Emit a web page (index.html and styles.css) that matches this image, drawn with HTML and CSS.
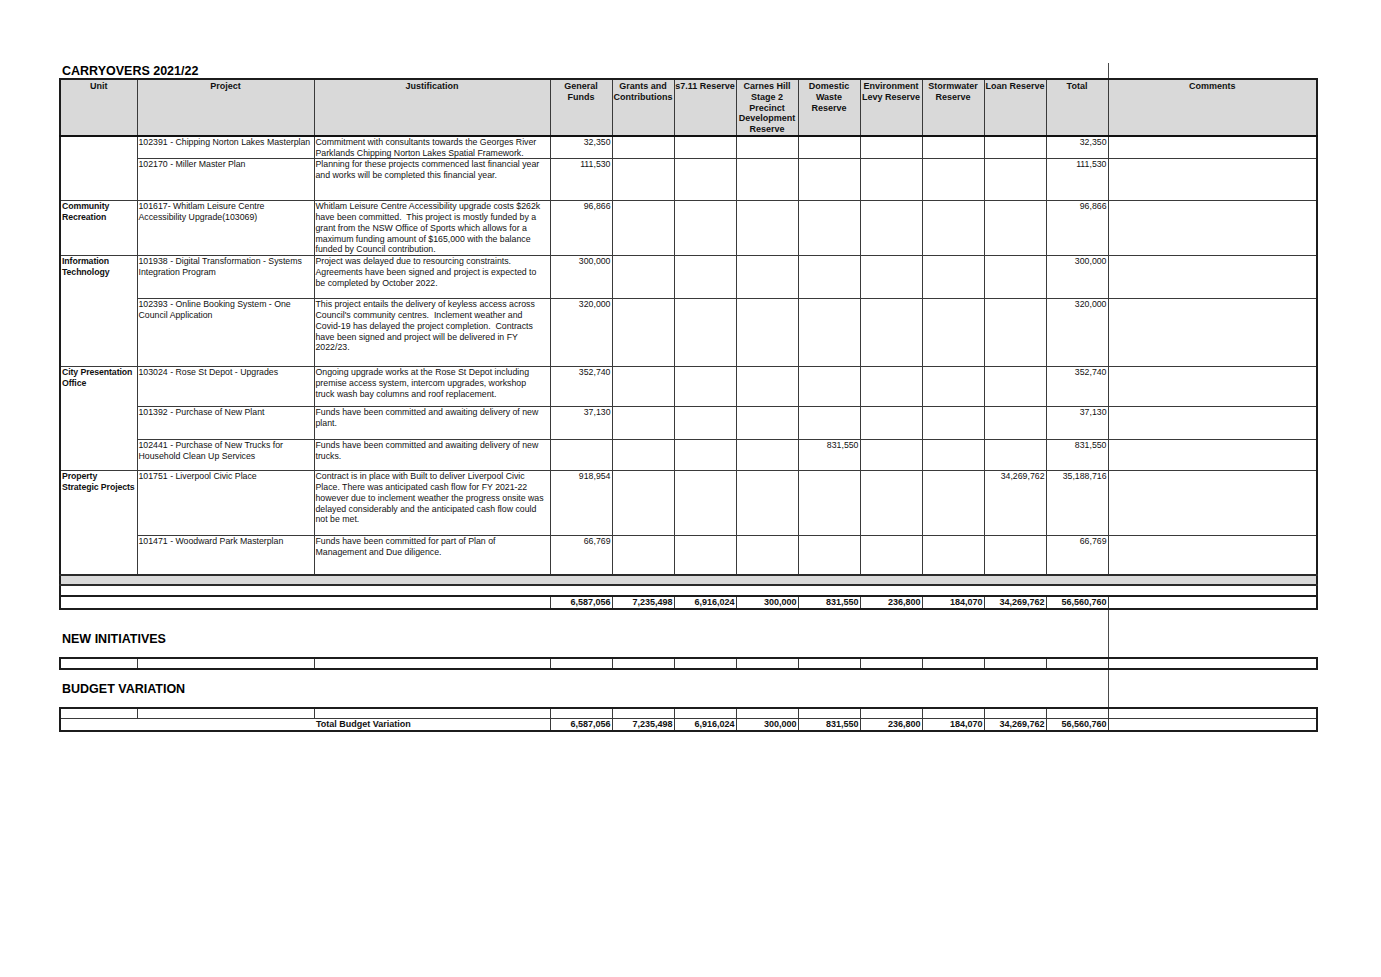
FILE: index.html
```
<!DOCTYPE html>
<html lang="en">
<head>
<meta charset="utf-8">
<title>Carryovers 2021/22</title>
<link rel="stylesheet" href="styles.css">
</head>
<body>
<div class="page">
  <div class="section-head head-first"><h2 class="title">CARRYOVERS 2021/22</h2></div>
  <table class="grid">
    <colgroup>
      <col class="c-unit"><col class="c-proj"><col class="c-just">
      <col class="c-num"><col class="c-num"><col class="c-num"><col class="c-num"><col class="c-num">
      <col class="c-num"><col class="c-num"><col class="c-num"><col class="c-num">
      <col class="c-com">
    </colgroup>
    <thead>
      <tr class="h-head">
        <th>Unit</th>
        <th>Project</th>
        <th>Justification</th>
        <th>General<br>Funds</th>
        <th>Grants and<br>Contributions</th>
        <th>s7.11 Reserve</th>
        <th>Carnes Hill<br>Stage 2<br>Precinct<br>Development<br>Reserve</th>
        <th>Domestic<br>Waste<br>Reserve</th>
        <th>Environment<br>Levy Reserve</th>
        <th>Stormwater<br>Reserve</th>
        <th>Loan Reserve</th>
        <th>Total</th>
        <th>Comments</th>
      </tr>
    </thead>
    <tbody>
      <tr class="h22">
        <td class="unit" rowspan="2"></td>
        <td>102391 - Chipping Norton Lakes Masterplan</td>
        <td>Commitment with consultants towards the Georges River<br>Parklands Chipping Norton Lakes Spatial Framework.</td>
        <td class="num">32,350</td><td></td><td></td><td></td><td></td><td></td><td></td><td></td>
        <td class="num">32,350</td><td></td>
      </tr>
      <tr class="h42">
        <td>102170 - Miller Master Plan</td>
        <td>Planning for these projects commenced last financial year<br>and works will be completed this financial year.</td>
        <td class="num">111,530</td><td></td><td></td><td></td><td></td><td></td><td></td><td></td>
        <td class="num">111,530</td><td></td>
      </tr>
      <tr class="h55">
        <td class="unit">Community<br>Recreation</td>
        <td>101617- Whitlam Leisure Centre<br>Accessibility Upgrade(103069)</td>
        <td>Whitlam Leisure Centre Accessibility upgrade costs $262k<br>have been committed.&nbsp; This project is mostly funded by a<br>grant from the NSW Office of Sports which allows for a<br>maximum funding amount of $165,000 with the balance<br>funded by Council contribution.</td>
        <td class="num">96,866</td><td></td><td></td><td></td><td></td><td></td><td></td><td></td>
        <td class="num">96,866</td><td></td>
      </tr>
      <tr class="h43">
        <td class="unit" rowspan="2">Information<br>Technology</td>
        <td>101938 - Digital Transformation - Systems<br>Integration Program</td>
        <td>Project was delayed due to resourcing constraints.<br>Agreements have been signed and project is expected to<br>be completed by October 2022.</td>
        <td class="num">300,000</td><td></td><td></td><td></td><td></td><td></td><td></td><td></td>
        <td class="num">300,000</td><td></td>
      </tr>
      <tr class="h68">
        <td>102393 - Online Booking System - One<br>Council Application</td>
        <td>This project entails the delivery of keyless access across<br>Council's community centres.&nbsp; Inclement weather and<br>Covid-19 has delayed the project completion.&nbsp; Contracts<br>have been signed and project will be delivered in FY<br>2022/23.</td>
        <td class="num">320,000</td><td></td><td></td><td></td><td></td><td></td><td></td><td></td>
        <td class="num">320,000</td><td></td>
      </tr>
      <tr class="h40">
        <td class="unit" rowspan="3">City Presentation<br>Office</td>
        <td>103024 - Rose St Depot - Upgrades</td>
        <td>Ongoing upgrade works at the Rose St Depot including<br>premise access system, intercom upgrades, workshop<br>truck wash bay columns and roof replacement.</td>
        <td class="num">352,740</td><td></td><td></td><td></td><td></td><td></td><td></td><td></td>
        <td class="num">352,740</td><td></td>
      </tr>
      <tr class="h33">
        <td>101392 - Purchase of New Plant</td>
        <td>Funds have been committed and awaiting delivery of new<br>plant.</td>
        <td class="num">37,130</td><td></td><td></td><td></td><td></td><td></td><td></td><td></td>
        <td class="num">37,130</td><td></td>
      </tr>
      <tr class="h31">
        <td>102441 - Purchase of New Trucks for<br>Household Clean Up Services</td>
        <td>Funds have been committed and awaiting delivery of new<br>trucks.</td>
        <td></td><td></td><td></td><td></td><td class="num">831,550</td><td></td><td></td><td></td>
        <td class="num">831,550</td><td></td>
      </tr>
      <tr class="h65">
        <td class="unit" rowspan="2">Property<br>Strategic Projects</td>
        <td>101751 - Liverpool Civic Place</td>
        <td>Contract is in place with Built to deliver Liverpool Civic<br>Place. There was anticipated cash flow for FY 2021-22<br>however due to inclement weather the progress onsite was<br>delayed considerably and the anticipated cash flow could<br>not be met.</td>
        <td class="num">918,954</td><td></td><td></td><td></td><td></td><td></td><td></td>
        <td class="num">34,269,762</td>
        <td class="num">35,188,716</td><td></td>
      </tr>
      <tr class="h39">
        <td>101471 - Woodward Park Masterplan</td>
        <td>Funds have been committed for part of Plan of<br>Management and Due diligence.</td>
        <td class="num">66,769</td><td></td><td></td><td></td><td></td><td></td><td></td><td></td>
        <td class="num">66,769</td><td></td>
      </tr>
      <tr class="h10 band">
        <td colspan="13"></td>
      </tr>
      <tr class="h11 blank">
        <td colspan="13"></td>
      </tr>
      <tr class="h11 tot">
        <td colspan="3"></td>
        <td class="num">6,587,056</td>
        <td class="num">7,235,498</td>
        <td class="num">6,916,024</td>
        <td class="num">300,000</td>
        <td class="num">831,550</td>
        <td class="num">236,800</td>
        <td class="num">184,070</td>
        <td class="num">34,269,762</td>
        <td class="num">56,560,760</td>
        <td></td>
      </tr>
    </tbody>
  </table>

  <div class="section-head head-new"><h2 class="title">NEW INITIATIVES</h2></div>
  <table class="grid">
    <colgroup>
      <col class="c-unit"><col class="c-proj"><col class="c-just">
      <col class="c-num"><col class="c-num"><col class="c-num"><col class="c-num"><col class="c-num">
      <col class="c-num"><col class="c-num"><col class="c-num"><col class="c-num">
      <col class="c-com">
    </colgroup>
    <tbody>
      <tr class="h11">
        <td></td><td></td><td></td><td></td><td></td><td></td><td></td><td></td><td></td><td></td><td></td><td></td><td></td>
      </tr>
    </tbody>
  </table>

  <div class="section-head head-budget"><h2 class="title">BUDGET VARIATION</h2></div>
  <table class="grid">
    <colgroup>
      <col class="c-unit"><col class="c-proj"><col class="c-just">
      <col class="c-num"><col class="c-num"><col class="c-num"><col class="c-num"><col class="c-num">
      <col class="c-num"><col class="c-num"><col class="c-num"><col class="c-num">
      <col class="c-com">
    </colgroup>
    <tbody>
      <tr class="h11">
        <td></td><td></td><td></td><td></td><td></td><td></td><td></td><td></td><td></td><td></td><td></td><td></td><td></td>
      </tr>
      <tr class="h11 tot-b">
        <td colspan="2" class="open-r"></td>
        <td class="open-l label">Total Budget Variation</td>
        <td class="num">6,587,056</td>
        <td class="num">7,235,498</td>
        <td class="num">6,916,024</td>
        <td class="num">300,000</td>
        <td class="num">831,550</td>
        <td class="num">236,800</td>
        <td class="num">184,070</td>
        <td class="num">34,269,762</td>
        <td class="num">56,560,760</td>
        <td></td>
      </tr>
    </tbody>
  </table>
</div>
</body>
</html>
```
FILE: styles.css
```
html, body {
  margin: 0;
  padding: 0;
  background: #ffffff;
}

body {
  font-family: "Liberation Sans", Arial, sans-serif;
  color: #111111;
}

.page {
  padding: 63px 0 0 59px;
}

.section-head {
  box-sizing: border-box;
  width: 1050px;
  border-right: 1px solid #4a4a4a;
  display: flex;
  align-items: flex-start;
}

.title {
  margin: 0;
  padding-left: 3px;
  font-size: 12.5px;
  line-height: 13px;
  font-weight: bold;
  color: #000000;
}

.head-first {
  height: 15px;
  align-items: flex-end;
}

.head-new {
  height: 47px;
  padding-top: 23px;
}

.head-budget {
  height: 37px;
  padding-top: 13px;
}

.grid {
  border-collapse: collapse;
  table-layout: fixed;
  width: 1257px;
  border: 2px solid #1c1c1c;
}

.c-unit { width: 77px; }
.c-proj { width: 177px; }
.c-just { width: 236px; }
.c-num { width: 62px; }
.c-com { width: 209px; }

.grid th,
.grid td {
  border: 1px solid #3a3a3a;
  padding: 0 1px;
  vertical-align: top;
  font-size: 8.75px;
  line-height: 10.75px;
  white-space: nowrap;
  overflow: hidden;
  text-align: left;
}

.grid th {
  background: #d9d9d9;
  font-weight: bold;
  text-align: center;
  padding: 1px 0 0;
  border-bottom: 2px solid #111111;
  font-size: 9px;
  line-height: 10.8px;
  overflow: visible;
}

.grid td.unit {
  font-weight: bold;
  padding-left: 1px;
  letter-spacing: -0.1px;
}

.grid td.num {
  text-align: right;
  padding: 0 1px 0 0;
}

.h-head { height: 56px; }
.h22 { height: 22px; }
.h42 { height: 42px; }
.h55 { height: 55px; }
.h43 { height: 43px; }
.h68 { height: 68px; }
.h40 { height: 40px; }
.h33 { height: 33px; }
.h31 { height: 31px; }
.h65 { height: 65px; }
.h39 { height: 39px; }
.h10 { height: 10px; }
.h11 { height: 11px; }
.h12 { height: 12px; }

.band td {
  background: #d9d9d9;
  border-top: 2px solid #2a2a2a;
  border-bottom: 2px solid #2a2a2a;
}

.tot td {
  border-top: 2px solid #1c1c1c;
  font-weight: bold;
  font-size: 9px;
  line-height: 11px;
}

.tot-b td {
  font-weight: bold;
  font-size: 9px;
  line-height: 11px;
}

.grid td.open-r { border-right: none; }
.grid td.open-l { border-left: none; }

.grid td.label {
  padding-left: 2px;
}
```
